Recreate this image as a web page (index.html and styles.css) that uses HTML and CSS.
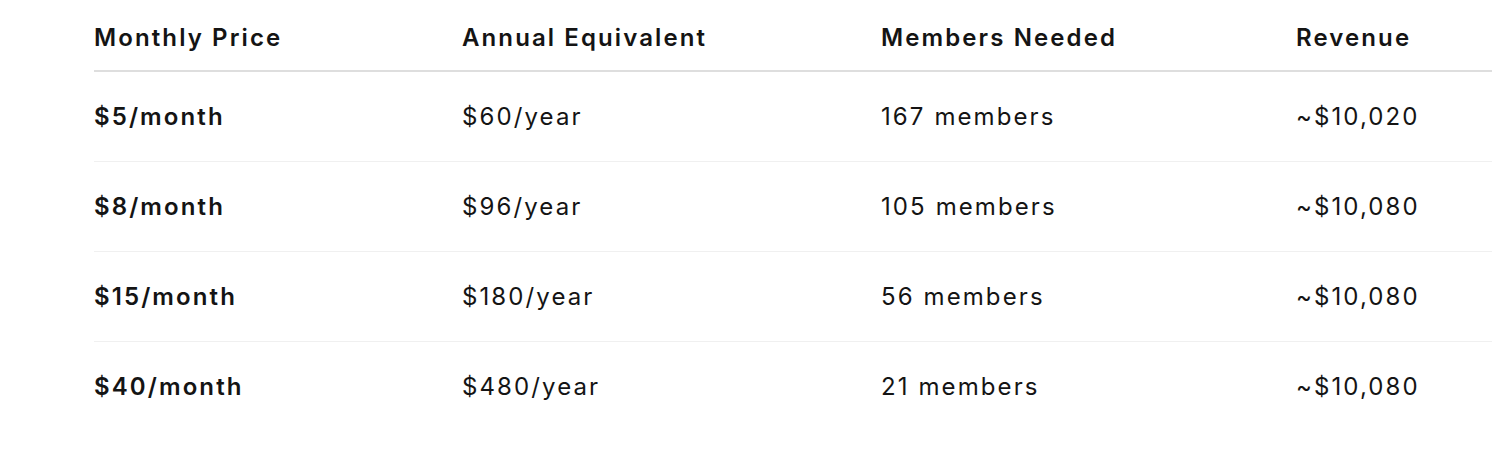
FILE: index.html
```html
<!DOCTYPE html>
<html>
<head>
<meta charset="utf-8">
<link rel="stylesheet" href="styles.css">
</head>
<body>
<div class="wrap">
<table class="pricing">
<colgroup><col class="c1"><col class="c2"><col class="c3"><col class="c4"></colgroup>
<thead>
<tr><th>Monthly Price</th><th>Annual Equivalent</th><th>Members Needed</th><th>Revenue</th></tr>
</thead>
<tbody>
<tr><td class="strong">$5/month</td><td>$60/year</td><td>167 members</td><td>~$10,020</td></tr>
<tr><td class="strong">$8/month</td><td>$96/year</td><td>105 members</td><td>~$10,080</td></tr>
<tr><td class="strong">$15/month</td><td>$180/year</td><td>56 members</td><td>~$10,080</td></tr>
<tr><td class="strong">$40/month</td><td>$480/year</td><td>21 members</td><td>~$10,080</td></tr>
</tbody>
</table>
</div>
</body>
</html>
```
FILE: styles.css
```css
html, body { margin: 0; padding: 0; background: #fff; }
body { overflow: hidden; font-family: Inter, "Noto Sans", sans-serif; color: #141414; }
.wrap { padding: 5px 0 0 94px; width: 1700px; }
.pricing { border-collapse: collapse; table-layout: fixed; width: 1602px; font-size: 24px; letter-spacing: 2.1px; }
.c1 { width: 368px; }
.c2 { width: 419px; }
.c3 { width: 415px; }
.c4 { width: 400px; }
.pricing th { text-align: left; font-weight: 600; padding: 18px 0 18px 0; line-height: 29px; border-bottom: 2px solid #dedede; }
.pricing td { padding: 30px 0; line-height: 29px; border-bottom: 1px solid #f0f0f0; font-weight: 400; }
.pricing tbody tr:last-child td { border-bottom: none; }
.pricing td.strong { font-weight: 600; }
```
